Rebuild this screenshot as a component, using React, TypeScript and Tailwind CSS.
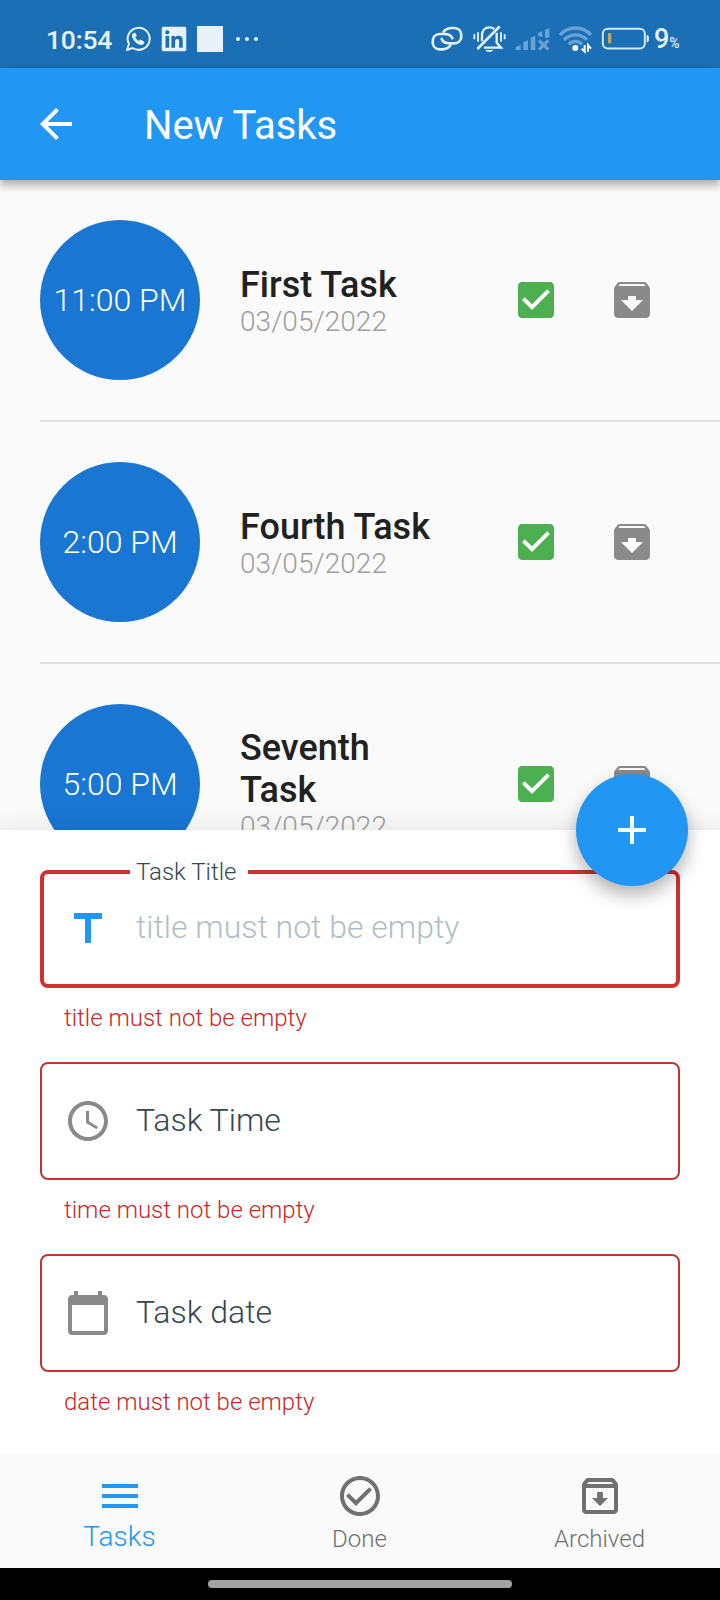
import type { ReactNode } from "react";
import { FaLinkedin } from "react-icons/fa";

const tasks = [
  { time: "11:00 PM", title: "First Task", date: "03/05/2022" },
  { time: "2:00 PM", title: "Fourth Task", date: "03/05/2022" },
  { time: "5:00 PM", title: "Seventh Task", date: "03/05/2022" },
];

function Icon({ d, className }: { d: string; className?: string }) {
  return (
    <svg viewBox="0 0 24 24" fill="currentColor" className={`size-12 shrink-0 ${className ?? ""}`}>
      <path d={d} />
    </svg>
  );
}

const icons = {
  back: "M20 11H7.83l5.59-5.59L12 4l-8 8 8 8 1.41-1.41L7.83 13H20v-2z",
  check:
    "M19 3H5c-1.11 0-2 .9-2 2v14c0 1.1.89 2 2 2h14c1.11 0 2-.9 2-2V5c0-1.1-.89-2-2-2zm-9 14l-5-5 1.41-1.41L10 14.17l7.59-7.59L19 8l-9 9z",
  archive:
    "M20.54 5.23l-1.39-1.68C18.88 3.21 18.47 3 18 3H6c-.47 0-.88.21-1.16.55L3.46 5.23C3.17 5.57 3 6.02 3 6.5V19c0 1.1.9 2 2 2h14c1.1 0 2-.9 2-2V6.5c0-.48-.17-.93-.46-1.27zM12 17.5L6.5 12H10v-2h4v2h3.500L12 17.5zM5.12 5l.81-1h12l.94 1H5.12z",
  archiveOutlined:
    "M20.54 5.23l-1.39-1.68C18.88 3.21 18.47 3 18 3H6c-.47 0-.88.21-1.16.55L3.46 5.23C3.17 5.57 3 6.02 3 6.5V19c0 1.1.9 2 2 2h14c1.1 0 2-.9 2-2V6.5c0-.48-.17-.93-.46-1.27zM6.24 5h11.520l.83 1H5.42l.82-1zM5 19V8h14v11H5zm8.450-9h-2.900v3H8l4 4 4-4h-2.550z",
  add: "M19 13h-6v6h-2v-6H5v-2h6V5h2v6h6v2z",
  title: "M5 4v3h5.500v12h3V7H19V4z",
  clock:
    "M11.99 2C6.47 2 2 6.48 2 12s4.470 10 9.990 10C17.520 22 22 17.520 22 12S17.520 2 11.990 2zM12 20c-4.420 0-8-3.580-8-8s3.580-8 8-8 8 3.580 8 8-3.580 8-8 8zm.500-13H11v6l5.250 3.150.750-1.230-4.500-2.670z",
  calendar:
    "M20 3h-1V1h-2v2H7V1H5v2H4c-1.100 0-2 .9-2 2v16c0 1.100.9 2 2 2h16c1.100 0 2-.9 2-2V5c0-1.100-.9-2-2-2zm0 18H4V8h16v13z",
  menu: "M3 18h18v-2H3v2zm0-5h18v-2H3v2zm0-7v2h18V6H3z",
  done: "M16.590 7.580L10 14.170l-3.590-3.580L5 12l5 5 8-8zM12 2C6.480 2 2 6.480 2 12s4.480 10 10 10 10-4.480 10-10S17.520 2 12 2zm0 18c-4.420 0-8-3.580-8-8s3.580-8 8-8 8 3.580 8 8-3.580 8-8 8z",
};

function StatusBar() {
  return (
    <div className="flex h-[68px] items-center bg-[#1a6fb5] pt-2.5 pl-[46px] text-[#e6f1fa]">
      <span className="w-[67px] pt-0.5 text-[26.5px] leading-8 font-medium tracking-[-0.2px]">10:54</span>
      <svg viewBox="372 75 84 84" className="ml-[11px] size-7 shrink-0" fill="none">
        <path d="M381 150l6-18a33 33 0 1 1 11 12z" stroke="currentColor" strokeWidth="6" strokeLinejoin="round" />
        <path
          d="M404 98c-5 0-9 5-8 11 3 13 13 23 26 26 6 1 11-3 11-8 0-2-1-3-3-4l-7-4c-2-1-3 0-4 1l-2 3c-5-2-9-6-11-11l3-3c1-1 1-2 1-3l-3-6c-1-1-1-2-3-2z"
          fill="currentColor"
        />
      </svg>
      <FaLinkedin className="ml-2 h-7 w-[28px] shrink-0" />
      <span className="ml-[9px] size-[26px] shrink-0 bg-[#e8f0f8]" />
      <span className="ml-[13px] flex gap-[5px]">
        <i className="size-1 rounded-full bg-current" />
        <i className="size-1 rounded-full bg-current" />
        <i className="size-1 rounded-full bg-current" />
      </span>
      <svg viewBox="90 72 102 90" className="ml-auto h-[30px] w-[34px] shrink-0" fill="none" stroke="currentColor" strokeWidth="8" strokeLinecap="round">
        <path d="M131 95c6-7 14-11 24-11h8c28 0 28 46 0 46h-14c-12 0-21-5-24-13" />
        <path d="M151 137c-6 7-14 11-24 11h-8c-28 0-28-46 0-46h14c12 0 21 5 24 13" />
      </svg>
      <svg viewBox="216 72 105 90" className="ml-2 h-[30px] w-[35px] shrink-0" fill="none" stroke="currentColor" strokeWidth="7">
        <path d="M246 124v-18c0-15 9-24 22-24 6 0 11 2 15 5M290 98v30l13 15h-51" />
        <path d="M232 147l67-68" strokeWidth="8" />
        <path d="M256 150h24c-3 8-21 8-24 0z" fill="currentColor" stroke="none" />
        <path d="M223 103v15M234 97v28M303 97v28M314 103v15" strokeWidth="5.500" />
      </svg>
      <svg viewBox="345 72 105 90" className="ml-2 h-[30px] w-[35px] shrink-0 text-[#68a3d5]" fill="currentColor">
        <path d="M347 141l15-6v15h-15zM370 127l14-6v29h-14zM392 113l14-6v43h-14zM414 99l13-5v18l-13-5zM435 90l13-6v28l-13 3z" />
        <path d="M417 121l28 28M445 121l-28 28" stroke="currentColor" strokeWidth="9" />
      </svg>
      <svg viewBox="474 72 105 90" className="ml-2 h-[30px] w-[35px] shrink-0" fill="none" stroke="#68a3d5" strokeWidth="10">
        <path d="M480 105a62 62 0 0 1 93 0M492 120a46 46 0 0 1 69 0M506 133a28 28 0 0 1 40 0" />
        <circle cx="526" cy="144" r="9" fill="#fff" stroke="none" />
        <path d="M554 135v20l-9-9M564 155v-20l9 11" stroke="#fff" strokeWidth="6" />
      </svg>
      <svg viewBox="603 72 147 90" className="ml-2 h-[30px] w-[49px] shrink-0" fill="none">
        <rect x="608.500" y="86.500" width="126" height="59" rx="15" stroke="#cfe8fb" strokeWidth="6" />
        <path d="M740 105c4 0 7 3 7 11s-3 11-7 11z" fill="#e6f1fa" />
        <rect x="624" y="99" width="10" height="31" rx="2" fill="#c6a35c" />
      </svg>
      <span className="ml-1 flex w-[66px] items-baseline pt-[3px] text-[27px] leading-8 font-medium">
        9<span className="text-[14px]">%</span>
      </span>
    </div>
  );
}

function TaskRow({ time, title, date }: { time: string; title: string; date: string }) {
  return (
    <div className="flex h-60 items-center gap-10 p-10">
      <div className="flex size-40 shrink-0 items-center justify-center rounded-full bg-[#1976d2] text-[32px] font-light text-white">
        {time}
      </div>
      <div className="min-w-0 flex-1">
        <div className="relative top-px text-[36px] leading-[42px] font-medium text-[#212121]">{title}</div>
        <div className="text-[28px] leading-[33px] font-light tracking-[0.05px] text-[#9e9e9e]">{date}</div>
      </div>
      <div className="flex">
        <div className="p-6 text-[#4caf50]">
          <Icon d={icons.check} />
        </div>
        <div className="p-6 text-[#8a8a8a]">
          <Icon d={icons.archive} />
        </div>
      </div>
    </div>
  );
}

function Field({ icon, error, focused, children }: { icon: string; error: string; focused?: boolean; children: ReactNode }) {
  return (
    <div className="h-48">
      <div
        className={`relative flex h-[118px] items-center rounded-lg text-[32px] font-light ${
          focused ? "border-4 border-[#d03030] pl-5" : "border-2 border-[#c23434] pl-[22px]"
        }`}
      >
        <Icon d={icon} className={focused ? "text-[#2196f3]" : "text-[#8a8a8a]"} />
        {children}
      </div>
      <div className="pt-4 pl-6 text-[24px] leading-7 font-light text-[#c62828]">{error}</div>
    </div>
  );
}

function NavItem({ icon, label, active }: { icon: string; label: string; active?: boolean }) {
  return (
    <div className={`flex flex-1 flex-col items-center pt-4 font-light ${active ? "text-[#2196f3]" : "text-[#707070]"}`}>
      <Icon d={icon} />
      <span className={active ? "pr-px text-[28px] leading-[33px]" : "pt-[5px] pr-px text-[24px] leading-7"}>{label}</span>
    </div>
  );
}

export default function App() {
  return (
    <div className="relative flex h-[1600px] w-[720px] flex-col overflow-hidden bg-[#fafafa] font-[Roboto,sans-serif]">
      <StatusBar />
      <header className="relative z-10 flex h-28 shrink-0 items-center bg-[#2196f3] pl-8 text-white shadow-[0_5px_9px_0_rgba(0,0,0,0.33)]">
        <Icon d={icons.back} />
        <h1 className="ml-16 pt-0.5 text-[40px] leading-[47px] tracking-[-0.1px]">New Tasks</h1>
      </header>
      <main className="h-[650px] shrink-0 overflow-hidden">
        {tasks.map((t) => (
          <div key={t.title}>
            <TaskRow {...t} />
            <div className="ml-10 h-0.5 bg-[#e0e0e0]" />
          </div>
        ))}
      </main>
      <section className="relative h-[626px] shrink-0 bg-white px-10 pt-10 shadow-[0_0_24px_0_rgba(0,0,0,0.10)]">
        <Field icon={icons.title} error="title must not be empty" focused>
          <span className="absolute -top-4 left-[86px] w-[118px] bg-white pl-1.5 text-[24px] leading-7 text-[#37474f]">
            Task Title
          </span>
          <span className="pb-1 pl-6 text-[#b0bec5]">title must not be empty</span>
        </Field>
        <Field icon={icons.clock} error="time must not be empty">
          <span className="pb-0.5 pl-6 text-[#37474f]">Task Time</span>
        </Field>
        <Field icon={icons.calendar} error="date must not be empty">
          <span className="pb-0.5 pl-6 text-[#37474f]">Task date</span>
        </Field>
        <button className="absolute -top-14 right-8 flex size-28 items-center justify-center rounded-full bg-[#2196f3] text-white shadow-[0_9px_18px_0_rgba(0,0,0,0.30)]">
          <Icon d={icons.add} />
        </button>
      </section>
      <nav className="relative flex h-28 shrink-0 bg-[#fafafa] shadow-[0_0_6px_0_rgba(0,0,0,0.06)]">
        <NavItem icon={icons.menu} label="Tasks" active />
        <NavItem icon={icons.done} label="Done" />
        <NavItem icon={icons.archiveOutlined} label="Archived" />
      </nav>
      <div className="relative flex h-8 shrink-0 items-center justify-center bg-black">
        <div className="h-2 w-[304px] rounded-full bg-[#a3a3a3]" />
      </div>
    </div>
  );
}
